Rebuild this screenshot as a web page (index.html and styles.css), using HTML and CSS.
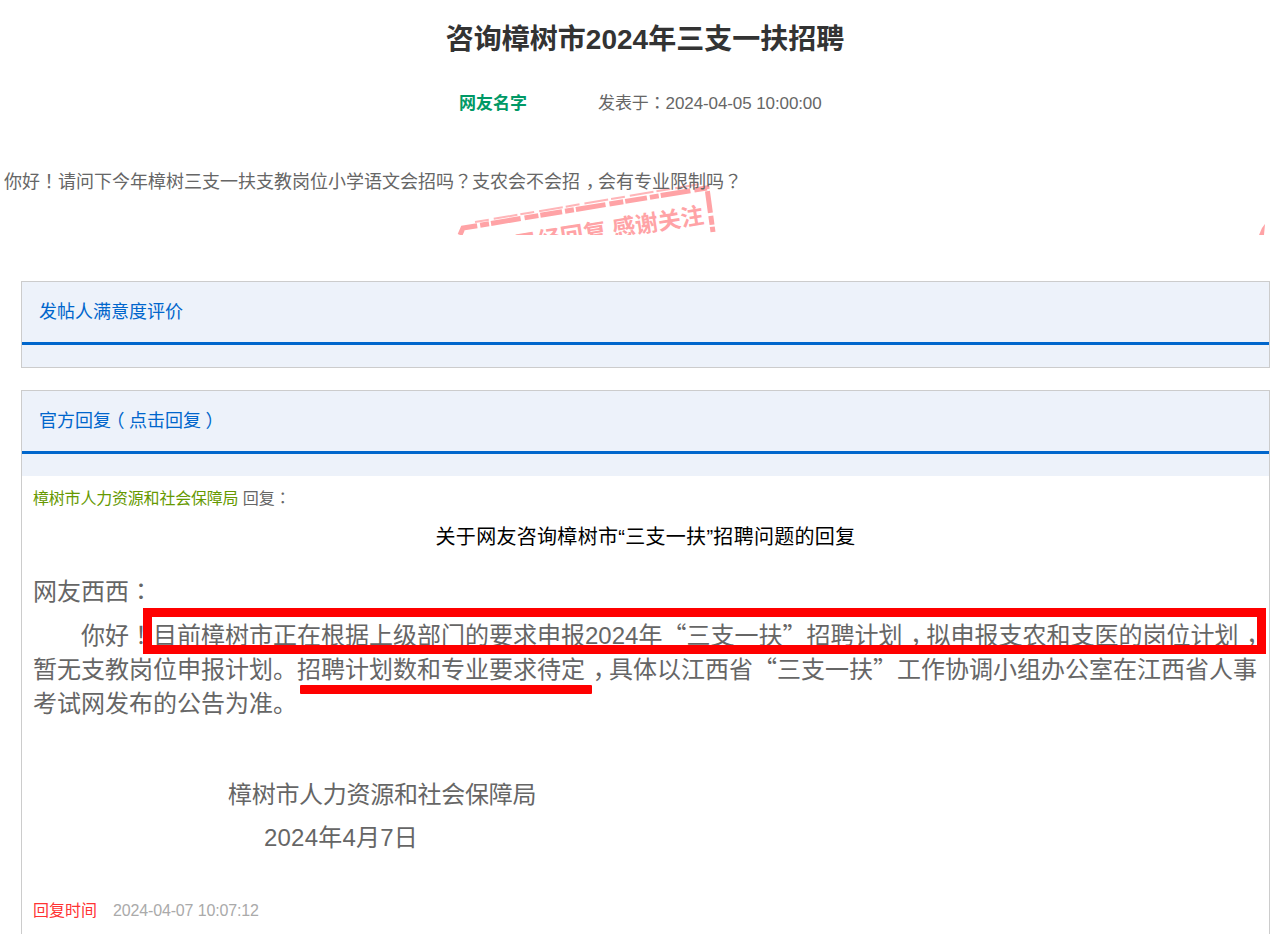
FILE: index.html
```html
<!DOCTYPE html>
<html lang="zh-CN">
<head>
<meta charset="utf-8">
<title>咨询樟树市2024年三支一扶招聘</title>
<link rel="stylesheet" href="styles.css">
</head>
<body>
<div class="page">
  <h1 class="title">咨询樟树市2024年三支一扶招聘</h1>
  <div class="meta">
    <span class="author">网友名字</span>
    <span class="posted">发表于<span class="p" lang="zh-TW">：</span>2024-04-05 10:00:00</span>
  </div>
  <div class="question">
    <svg class="stamp-art" width="1284" height="75" viewBox="0 0 1284 75" aria-hidden="true">
      <path class="stamp-line" d="M460 75 L463 68 L707 28 L713 72"/>
      <path class="stamp-line thin" d="M475 62 L700 24"/>
      <path class="stamp-sliver" d="M1259 75 L1262 68 L1265 64 L1264 75 Z"/>
    </svg>
    <div class="stamp-text">已经回复 感谢关注</div>
    <p class="question-text">你好<span class="p" lang="zh-TW">！</span>请问下今年樟树三支一扶支教岗位小学语文会招吗<span class="p" lang="zh-TW">？</span>支农会不会招<span class="c">，</span>会有专业限制吗<span class="p" lang="zh-TW">？</span></p>
  </div>
  <section class="panel rating">
    <div class="panel-head">发帖人满意度评价</div>
    <div class="panel-strip"></div>
  </section>
  <section class="panel reply">
    <div class="panel-head">官方回复<span class="po">（</span>点击回复<span class="pc">）</span></div>
    <div class="panel-strip"></div>
    <div class="reply-body">
      <div class="reply-from"><span class="dept">樟树市人力资源和社会保障局</span> 回复<span class="p" lang="zh-TW">：</span></div>
      <div class="reply-title">关于网友咨询樟树市“三支一扶”招聘问题的回复</div>
      <p class="salute">网友西西<span class="p" lang="zh-TW">：</span></p>
      <p class="para">你好<span class="p" lang="zh-TW">！</span>目前樟树市正在根据上级部门的要求申报2024年<span class="q">“</span>三支一扶<span class="q">”</span>招聘计划<span class="c">，</span>拟申报支农和支医的岗位计划<span class="c">，</span>暂无支教岗位申报计划。招聘计划数和专业要求待定<span class="c">，</span>具体以江西省<span class="q">“</span>三支一扶<span class="q">”</span>工作协调小组办公室在江西省人事考试网发布的公告为准。</p>
      <p class="sign-org">樟树市人力资源和社会保障局</p>
      <p class="sign-date">2024年4月7日</p>
      <div class="reply-time"><span class="time-label">回复时间</span><span class="time-value">2024-04-07 10:07:12</span></div>
    </div>
    <div class="mark-box"></div>
    <div class="mark-line"></div>
  </section>
</div>
</body>
</html>
```
FILE: styles.css
```css
* { box-sizing: border-box; }
html, body { margin: 0; padding: 0; height: 934px; overflow: hidden; background: #fff; }
body { font-family: "Liberation Sans", "Noto Sans CJK SC", sans-serif; color: #666; }
.page { width: 1284px; height: 934px; overflow: hidden; }
p { margin: 0; }
.p { font-family: "Noto Sans CJK TC", sans-serif; line-height: 0; }
.q { font-family: "Noto Sans CJK SC", sans-serif; line-height: 0; }
.c { font-family: "Noto Sans CJK SC", sans-serif; line-height: 0; position: relative; left: .32em; }
.po { font-family: "Noto Sans CJK SC", sans-serif; line-height: 0; position: relative; left: -.25em; }
.pc { font-family: "Noto Sans CJK SC", sans-serif; line-height: 0; position: relative; left: .25em; }
.title { margin: 0; padding: 20px 0 0 6px; height: 74px; line-height: 40px; font-size: 28px; font-weight: bold; color: #333; text-align: center; }
.meta { display: flex; height: 60px; padding-left: 459px; padding-top: 17px; font-size: 17px; line-height: 26px; }
.author { width: 139px; font-weight: bold; color: #009966; }
.posted { color: #666; letter-spacing: -0.1px; }
.question { position: relative; height: 101px; overflow: hidden; padding: 33px 0 0 4px; margin-bottom: 46px; }
.question-text { position: relative; font-size: 18px; line-height: 30px; color: #666; white-space: nowrap; }
.stamp-art { position: absolute; left: 0; top: 26px; }
.stamp-line { fill: none; stroke: #ffa3a6; stroke-width: 5; stroke-dasharray: 22 3 9 2 30 4 14 2; }
.stamp-line.thin { stroke-width: 2; stroke-dasharray: 14 5 24 3; opacity: .8; }
.stamp-sliver { fill: #ffa3a6; }
.stamp-text { position: absolute; left: 513px; top: 96px; font-size: 23px; line-height: 30px; font-weight: bold; color: #ffa3a6; white-space: nowrap; transform: rotate(-9deg); transform-origin: left top; }
.panel { position: relative; margin-left: 21px; width: 1249px; border: 1px solid #ccc; background: #edf2fa; }
.rating { height: 87px; margin-bottom: 22px; }
.reply { height: 560px; }
.panel-head { height: 63px; padding-left: 17px; font-size: 18px; line-height: 60px; color: #0066cc; border-bottom: 3px solid #0066cc; }
.panel-strip { height: 23px; }
.reply .panel-strip { height: 22px; }
.reply-body { background: #fff; padding: 11px 5px 0 11px; height: 480px; }
.reply-from { font-size: 16px; line-height: 24px; color: #666; }
.dept { color: #669900; letter-spacing: -0.2px; }
.reply-title { margin-top: 12px; font-size: 20px; line-height: 28px; color: #000; text-align: center; padding-right: 6px; letter-spacing: 0.3px; }
.salute { margin-top: 24px; font-size: 24px; line-height: 34px; }
.para { margin-top: 10px; font-size: 24px; line-height: 34px; text-indent: 48px; }
.sign-org { margin-top: 52px; margin-left: 195px; font-size: 24px; line-height: 44px; letter-spacing: -0.3px; }
.sign-date { margin-top: -1px; margin-left: 231px; font-size: 24px; line-height: 44px; letter-spacing: 0.2px; }
.reply-time { margin-top: 39px; font-size: 16px; line-height: 24px; }
.time-label { color: #ff3333; margin-right: 16px; }
.time-value { color: #aaa; letter-spacing: -0.15px; }
.mark-box { position: absolute; left: 121px; top: 217px; width: 1123px; height: 46px; border: 9px solid #ff0000; }
.mark-line { position: absolute; left: 278px; top: 294px; width: 292px; height: 9px; background: #ff0000; border-radius: 1px; }
```
